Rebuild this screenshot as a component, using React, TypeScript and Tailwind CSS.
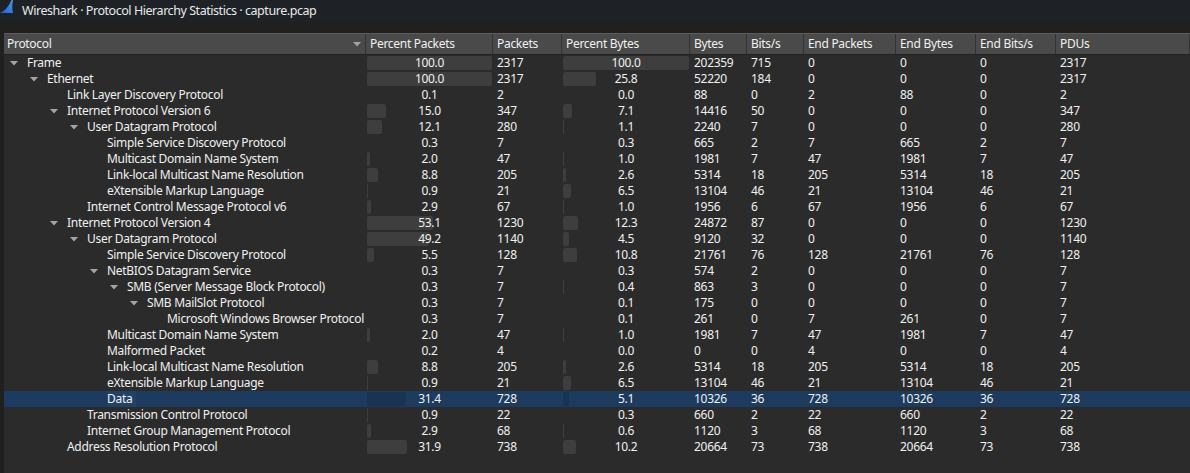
type Row = {
  name: string
  level: number
  open?: boolean
  pp: number
  packets: number
  pb: number
  bytes: number
  bits: number
  endPackets: number
  endBytes: number
  endBits: number
  pdus: number
  selected?: boolean
}

const rows: Row[] = [
  { name: 'Frame', level: 0, open: true, pp: 100.0, packets: 2317, pb: 100.0, bytes: 202359, bits: 715, endPackets: 0, endBytes: 0, endBits: 0, pdus: 2317 },
  { name: 'Ethernet', level: 1, open: true, pp: 100.0, packets: 2317, pb: 25.8, bytes: 52220, bits: 184, endPackets: 0, endBytes: 0, endBits: 0, pdus: 2317 },
  { name: 'Link Layer Discovery Protocol', level: 2, pp: 0.1, packets: 2, pb: 0.0, bytes: 88, bits: 0, endPackets: 2, endBytes: 88, endBits: 0, pdus: 2 },
  { name: 'Internet Protocol Version 6', level: 2, open: true, pp: 15.0, packets: 347, pb: 7.1, bytes: 14416, bits: 50, endPackets: 0, endBytes: 0, endBits: 0, pdus: 347 },
  { name: 'User Datagram Protocol', level: 3, open: true, pp: 12.1, packets: 280, pb: 1.1, bytes: 2240, bits: 7, endPackets: 0, endBytes: 0, endBits: 0, pdus: 280 },
  { name: 'Simple Service Discovery Protocol', level: 4, pp: 0.3, packets: 7, pb: 0.3, bytes: 665, bits: 2, endPackets: 7, endBytes: 665, endBits: 2, pdus: 7 },
  { name: 'Multicast Domain Name System', level: 4, pp: 2.0, packets: 47, pb: 1.0, bytes: 1981, bits: 7, endPackets: 47, endBytes: 1981, endBits: 7, pdus: 47 },
  { name: 'Link-local Multicast Name Resolution', level: 4, pp: 8.8, packets: 205, pb: 2.6, bytes: 5314, bits: 18, endPackets: 205, endBytes: 5314, endBits: 18, pdus: 205 },
  { name: 'eXtensible Markup Language', level: 4, pp: 0.9, packets: 21, pb: 6.5, bytes: 13104, bits: 46, endPackets: 21, endBytes: 13104, endBits: 46, pdus: 21 },
  { name: 'Internet Control Message Protocol v6', level: 3, pp: 2.9, packets: 67, pb: 1.0, bytes: 1956, bits: 6, endPackets: 67, endBytes: 1956, endBits: 6, pdus: 67 },
  { name: 'Internet Protocol Version 4', level: 2, open: true, pp: 53.1, packets: 1230, pb: 12.3, bytes: 24872, bits: 87, endPackets: 0, endBytes: 0, endBits: 0, pdus: 1230 },
  { name: 'User Datagram Protocol', level: 3, open: true, pp: 49.2, packets: 1140, pb: 4.5, bytes: 9120, bits: 32, endPackets: 0, endBytes: 0, endBits: 0, pdus: 1140 },
  { name: 'Simple Service Discovery Protocol', level: 4, pp: 5.5, packets: 128, pb: 10.8, bytes: 21761, bits: 76, endPackets: 128, endBytes: 21761, endBits: 76, pdus: 128 },
  { name: 'NetBIOS Datagram Service', level: 4, open: true, pp: 0.3, packets: 7, pb: 0.3, bytes: 574, bits: 2, endPackets: 0, endBytes: 0, endBits: 0, pdus: 7 },
  { name: 'SMB (Server Message Block Protocol)', level: 5, open: true, pp: 0.3, packets: 7, pb: 0.4, bytes: 863, bits: 3, endPackets: 0, endBytes: 0, endBits: 0, pdus: 7 },
  { name: 'SMB MailSlot Protocol', level: 6, open: true, pp: 0.3, packets: 7, pb: 0.1, bytes: 175, bits: 0, endPackets: 0, endBytes: 0, endBits: 0, pdus: 7 },
  { name: 'Microsoft Windows Browser Protocol', level: 7, pp: 0.3, packets: 7, pb: 0.1, bytes: 261, bits: 0, endPackets: 7, endBytes: 261, endBits: 0, pdus: 7 },
  { name: 'Multicast Domain Name System', level: 4, pp: 2.0, packets: 47, pb: 1.0, bytes: 1981, bits: 7, endPackets: 47, endBytes: 1981, endBits: 7, pdus: 47 },
  { name: 'Malformed Packet', level: 4, pp: 0.2, packets: 4, pb: 0.0, bytes: 0, bits: 0, endPackets: 4, endBytes: 0, endBits: 0, pdus: 4 },
  { name: 'Link-local Multicast Name Resolution', level: 4, pp: 8.8, packets: 205, pb: 2.6, bytes: 5314, bits: 18, endPackets: 205, endBytes: 5314, endBits: 18, pdus: 205 },
  { name: 'eXtensible Markup Language', level: 4, pp: 0.9, packets: 21, pb: 6.5, bytes: 13104, bits: 46, endPackets: 21, endBytes: 13104, endBits: 46, pdus: 21 },
  { name: 'Data', level: 4, selected: true, pp: 31.4, packets: 728, pb: 5.1, bytes: 10326, bits: 36, endPackets: 728, endBytes: 10326, endBits: 36, pdus: 728 },
  { name: 'Transmission Control Protocol', level: 3, pp: 0.9, packets: 22, pb: 0.3, bytes: 660, bits: 2, endPackets: 22, endBytes: 660, endBits: 2, pdus: 22 },
  { name: 'Internet Group Management Protocol', level: 3, pp: 2.9, packets: 68, pb: 0.6, bytes: 1120, bits: 3, endPackets: 68, endBytes: 1120, endBits: 3, pdus: 68 },
  { name: 'Address Resolution Protocol', level: 2, pp: 31.9, packets: 738, pb: 10.2, bytes: 20664, bits: 73, endPackets: 738, endBytes: 20664, endBits: 73, pdus: 738 },
]

function Fin() {
  return (
    <svg width="14" height="14" viewBox="0 0 14 14" className="shrink-0">
      <defs>
        <linearGradient id="fin" x1="0" y1="1" x2="1" y2="0">
          <stop offset="0" stopColor="#1a5fd0" />
          <stop offset="1" stopColor="#4a9bf0" />
        </linearGradient>
      </defs>
      <path d="M0 13 C5 11 9 6 11.5 0 L13 0 C12 5 12 9 13 13 Z" fill="url(#fin)" />
    </svg>
  )
}

function Arrow() {
  return (
    <svg width="8" height="5" viewBox="0 0 8 5">
      <path d="M0 0 L8 0 L4 4.5 Z" fill="#a3a3a3" />
    </svg>
  )
}

function PercentCell({ value, max, width, selected }: { value: number; max: number; width: string; selected?: boolean }) {
  return (
    <div className={`${width} shrink-0 relative h-full px-[1px] pt-[1px]`}>
      <div
        className={`h-[14px] rounded-[2px] ${selected ? 'bg-[#1a3352]' : 'bg-[#3e3e3e]'}`}
        style={{ width: Math.round((value / 100) * max) }}
      />
      <div className="absolute inset-0 flex items-center justify-center">{value.toFixed(1)}</div>
    </div>
  )
}

function Cell({ children, width }: { children: React.ReactNode; width: string }) {
  return <div className={`${width} shrink-0 pl-[4px] whitespace-nowrap`}>{children}</div>
}

const headers: [string, string][] = [
  ['Percent Packets', 'w-[127px]'],
  ['Packets', 'w-[69px]'],
  ['Percent Bytes', 'w-[128px]'],
  ['Bytes', 'w-[57px]'],
  ['Bits/s', 'w-[57px]'],
  ['End Packets', 'w-[92px]'],
  ['End Bytes', 'w-[80px]'],
  ['End Bits/s', 'w-[80px]'],
  ['PDUs', 'flex-1'],
]

export default function App() {
  return (
    <div
      className="w-[1190px] h-[473px] overflow-hidden bg-[#202020] text-[#f0f0f0] text-[12px] leading-[16px] tracking-[-0.3px]"
      style={{ fontFamily: '"Noto Sans", "Liberation Sans", sans-serif' }}
    >
      <div className="h-[21px] bg-[#1e2227] flex items-start gap-[8px]">
        <Fin />
        <span className="text-[12.5px] leading-[21px] tracking-[-0.45px] text-[#e8e8e8] whitespace-nowrap">
          Wireshark · Protocol Hierarchy Statistics · capture.pcap
        </span>
      </div>

      <div className="h-[12px]" />

      <div className="ml-[4px] h-[440px] bg-[#2b2b2b]">
        <div className="h-[22px] flex bg-[#4a4a4a] border-t border-[#5c5c5c] border-b border-b-[#222]">
          <div className="w-[362px] shrink-0 flex items-center justify-between pl-[3px] pr-[4px] border-r border-[#333]">
            <span>Protocol</span>
            <Arrow />
          </div>
          {headers.map(([label, w]) => (
            <div key={label} className={`${w} shrink-0 flex items-center pl-[4px] border-r border-[#333] whitespace-nowrap`}>
              {label}
            </div>
          ))}
        </div>

        {rows.map((r, i) => (
          <div key={i} className={`h-[16px] flex ${r.selected ? 'bg-[#1c3b5e]' : ''}`}>
            <div className="w-[362px] shrink-0 flex items-center whitespace-nowrap" style={{ paddingLeft: 6 + r.level * 20 }}>
              <div className="w-[17px] shrink-0 flex items-center">{r.open && <Arrow />}</div>
              <span className={`pr-[4px] ${r.selected ? 'bg-[#214268]' : ''}`}>{r.name}</span>
            </div>
            <PercentCell value={r.pp} max={125} width="w-[127px]" selected={r.selected} />
            <Cell width="w-[69px]">{r.packets}</Cell>
            <PercentCell value={r.pb} max={126} width="w-[128px]" selected={r.selected} />
            <Cell width="w-[57px]">{r.bytes}</Cell>
            <Cell width="w-[57px]">{r.bits}</Cell>
            <Cell width="w-[92px]">{r.endPackets}</Cell>
            <Cell width="w-[80px]">{r.endBytes}</Cell>
            <Cell width="w-[80px]">{r.endBits}</Cell>
            <Cell width="flex-1">{r.pdus}</Cell>
          </div>
        ))}
      </div>
    </div>
  )
}
